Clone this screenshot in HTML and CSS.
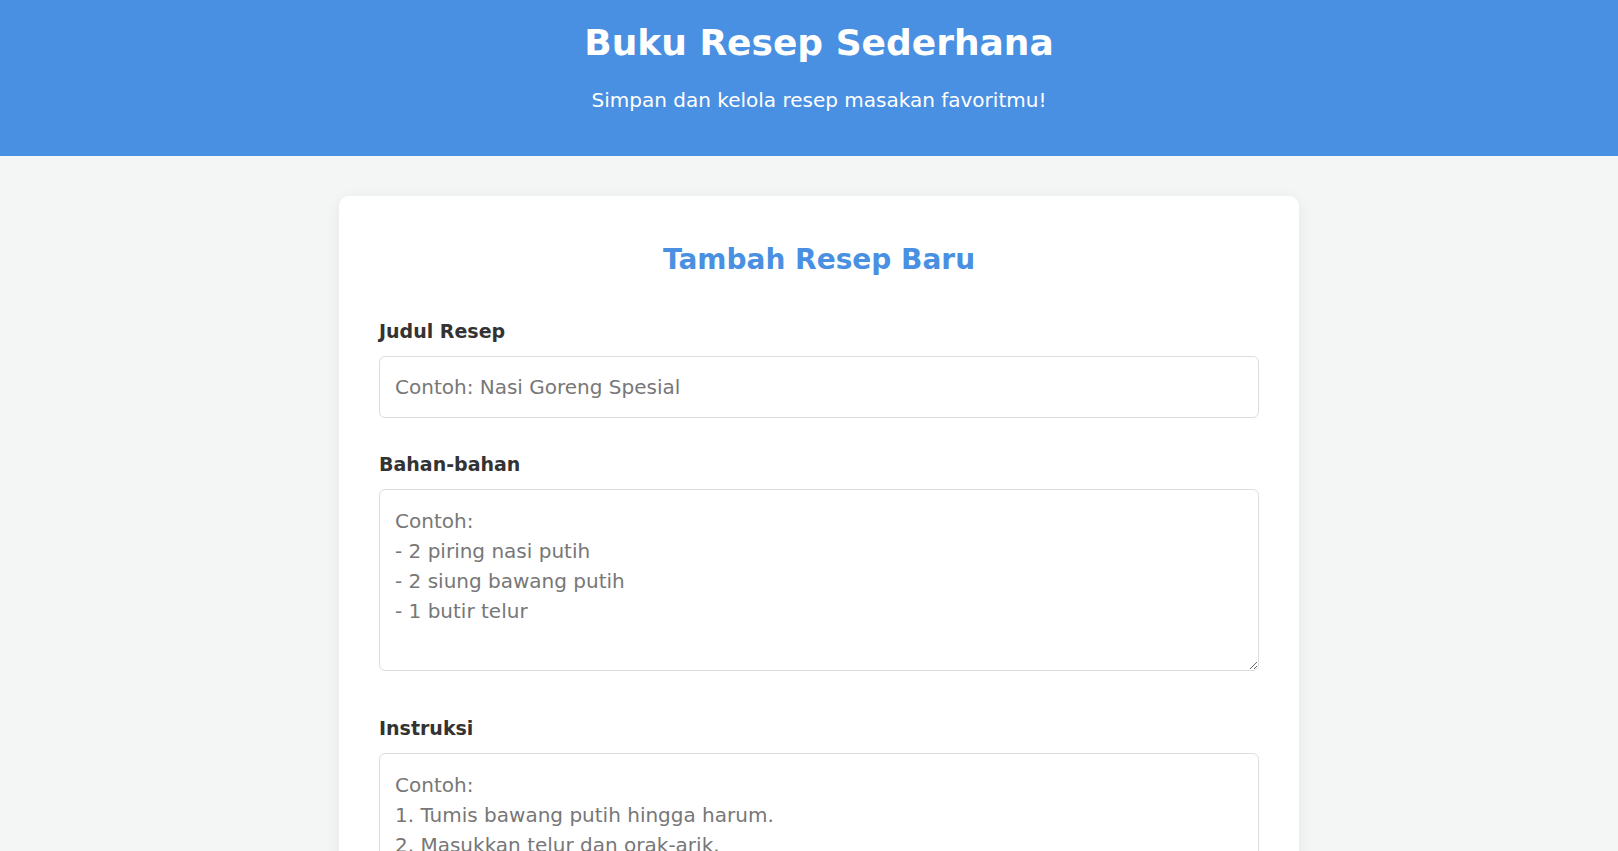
FILE: index.html
```html
<!DOCTYPE html>
<html lang="id">
<head>
  <meta charset="UTF-8" />
  <title>Buku Resep Sederhana</title>
  <meta name="viewport" content="width=device-width, initial-scale=1">
  <link rel="stylesheet" href="styles.css">
</head>
<body>

  <header class="header">
    <h1>Buku Resep Sederhana</h1>
    <p>Simpan dan kelola resep masakan favoritmu!</p>
  </header>

  <main class="main">
    <section class="card">
      <h2>Tambah Resep Baru</h2>

      <form id="form-resep">
        <div class="form-group">
          <label for="judul">Judul Resep</label>
          <input type="text" id="judul" placeholder="Contoh: Nasi Goreng Spesial">
        </div>

        <div class="form-group form-group-area">
          <label for="bahan">Bahan-bahan</label>
          <textarea id="bahan" placeholder="Contoh:&#10;- 2 piring nasi putih&#10;- 2 siung bawang putih&#10;- 1 butir telur"></textarea>
        </div>

        <div class="form-group form-group-area">
          <label for="instruksi">Instruksi</label>
          <textarea id="instruksi" placeholder="Contoh:&#10;1. Tumis bawang putih hingga harum.&#10;2. Masukkan telur dan orak-arik.&#10;3. Masukkan nasi, aduk hingga rata."></textarea>
        </div>

        <button type="submit" class="btn-simpan">Simpan Resep</button>
      </form>
    </section>
  </main>

</body>
</html>
```

FILE: styles.css
```css
body {
  margin: 0;
  background-color: #f4f6f5;
  font-family: "DejaVu Sans", "Noto Sans", sans-serif;
  color: #333;
}

.header {
  background-color: #4a90e2;
  color: #fff;
  text-align: center;
  padding: 21px 0 42px 20px;
}

.header h1 {
  margin: 0;
  font-size: 36px;
  line-height: 44px;
  font-weight: 700;
}

.header p {
  margin: 21px 0 0;
  font-size: 20px;
  line-height: 28px;
}

.main {
  padding: 40px 0 40px 20px;
}

.card {
  box-sizing: border-box;
  width: 960px;
  margin: 0 auto;
  padding: 40px;
  background-color: #fff;
  border-radius: 10px;
  box-shadow: 0 4px 16px rgba(0, 0, 0, 0.07);
}

.card h2 {
  margin: 0 0 34px;
  text-align: center;
  color: #4a90e2;
  font-size: 28px;
  line-height: 48px;
  font-weight: 700;
}

.form-group {
  margin-bottom: 33px;
}

.form-group-area {
  margin-bottom: 44px;
}

.form-group label {
  display: block;
  margin-bottom: 12px;
  font-size: 19px;
  line-height: 26px;
  font-weight: 700;
  color: #333;
}

.form-group input,
.form-group textarea {
  display: block;
  box-sizing: border-box;
  width: 100%;
  border: 1px solid #ddd;
  border-radius: 6px;
  font-family: inherit;
  font-size: 20px;
  color: #333;
  background-color: #fff;
}

.form-group input {
  height: 62px;
  padding: 0 15px;
}

.form-group textarea {
  height: 182px;
  padding: 16px 15px 14px;
  line-height: 30px;
}

.form-group input::placeholder,
.form-group textarea::placeholder {
  color: #777;
}

.btn-simpan {
  display: block;
  width: 100%;
  padding: 15px;
  border: none;
  border-radius: 6px;
  background-color: #4a90e2;
  color: #fff;
  font-family: inherit;
  font-size: 20px;
  font-weight: 700;
  cursor: pointer;
}
```
